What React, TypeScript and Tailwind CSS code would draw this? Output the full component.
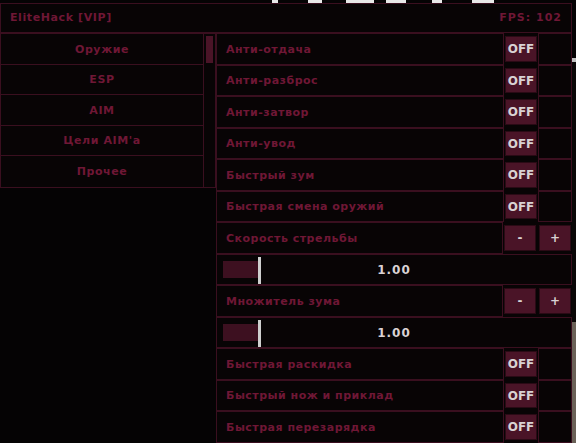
import React from 'react';

const font = { fontFamily: '"DejaVu Sans", Verdana, sans-serif' };

type Row =
  | { kind: 'toggle'; label: string }
  | { kind: 'step'; label: string }
  | { kind: 'slider'; value: string };

const menu = ['Оружие', 'ESP', 'AIM', "Цели AIM'a", 'Прочее'];

const rows: Row[] = [
  { kind: 'toggle', label: 'Анти-отдача' },
  { kind: 'toggle', label: 'Анти-разброс' },
  { kind: 'toggle', label: 'Анти-затвор' },
  { kind: 'toggle', label: 'Анти-увод' },
  { kind: 'toggle', label: 'Быстрый зум' },
  { kind: 'toggle', label: 'Быстрая смена оружий' },
  { kind: 'step', label: 'Скорость стрельбы' },
  { kind: 'slider', value: '1.00' },
  { kind: 'step', label: 'Множитель зума' },
  { kind: 'slider', value: '1.00' },
  { kind: 'toggle', label: 'Быстрая раскидка' },
  { kind: 'toggle', label: 'Быстрый нож и приклад' },
  { kind: 'toggle', label: 'Быстрая перезарядка' },
];

function Btn({ children }: { children: React.ReactNode }) {
  return (
    <div className="w-[32px] h-full flex items-center justify-center pt-[1px] bg-[#4a1427] border border-[#2a0a15] text-[#d9d2d4] text-[12px] font-bold">
      {children}
    </div>
  );
}

function RowView({ row }: { row: Row }) {
  if (row.kind === 'slider') {
    return (
      <div className="h-[31.5px] flex items-center border border-[#3a0f1f] relative">
        <div className="absolute left-[6px] top-[6px] w-[36px] h-[17px] bg-[#3d1020]" />
        <div className="absolute left-[41px] top-[2px] w-[3px] h-[27px] bg-[#cfcfcf]" />
        <div className="flex-1 pt-[2px] text-center text-[#d9d2d4] text-[12px] font-bold tracking-[1px]">{row.value}</div>
      </div>
    );
  }
  return (
    <div className="h-[31.5px] flex">
      <div className="flex-1 flex items-center pl-[9px] pt-[2px] border border-[#3a0f1f] text-[#6f1735] text-[11px] font-bold tracking-[0.5px]">
        {row.label}
      </div>
      {row.kind === 'toggle' ? (
        <>
          <div className="py-[3px] px-[1px] flex">
            <Btn>OFF</Btn>
          </div>
          <div className="w-[34px] border border-[#3a0f1f]" />
        </>
      ) : (
        <div className="py-[3px] px-[1px] flex gap-[3px]">
          <Btn>-</Btn>
          <Btn>+</Btn>
        </div>
      )}
    </div>
  );
}

export default function App() {
  return (
    <div className="w-[576px] h-[443px] overflow-hidden bg-[#050304]" style={font}>
      <div className="h-[3px] flex bg-[#050304]">
        <div className="w-[272px]" />
        <div className="w-[6px] bg-[#e8e8e8]" />
        <div className="w-[30px]" />
        <div className="w-[14px] bg-[#e8e8e8]" />
        <div className="w-[24px]" />
        <div className="w-[28px] bg-[#e8e8e8]" />
        <div className="w-[12px]" />
        <div className="w-[20px] bg-[#e8e8e8]" />
        <div className="w-[26px]" />
        <div className="w-[10px] bg-[#e8e8e8]" />
        <div className="w-[30px]" />
        <div className="w-[22px] bg-[#e8e8e8]" />
      </div>
      <div className="flex">
        <div className="w-[572px]">
          <div className="h-[30px] flex items-center justify-between px-[9px] pt-[1px] border border-[#3a0f1f] bg-[#080405] text-[#6f1735] text-[11px] font-bold tracking-[0.6px]">
            <span>EliteHack [VIP]</span>
            <span className="tracking-[1px]">FPS: 102</span>
          </div>
          <div className="flex">
            <div className="w-[216px] self-start flex border border-[#3a0f1f] bg-[#080405]">
              <div className="w-[203px] flex flex-col">
                {menu.map((m) => (
                  <div
                    key={m}
                    className="h-[30.6px] flex items-center justify-center pt-[2px] border-b border-r border-[#3a0f1f] last:border-b-0 text-[#6f1735] text-[11px] font-bold tracking-[0.6px]"
                  >
                    {m}
                  </div>
                ))}
              </div>
              <div className="flex-1 px-[2px] pt-[2px]">
                <div className="h-[27px] bg-[#4a1427]" />
              </div>
            </div>
            <div className="flex-1 flex flex-col bg-[#080405]">
              {rows.map((r, i) => (
                <RowView key={i} row={r} />
              ))}
            </div>
          </div>
        </div>
        <div className="flex-1 flex flex-col">
          <div className="h-[55px] bg-[#050304]" />
          <div className="h-[4px] bg-[#bdbdbd]" />
          <div className="h-[260px] bg-[#0a0707]" />
          <div className="flex-1 bg-[#6b6258]" />
        </div>
      </div>
    </div>
  );
}
